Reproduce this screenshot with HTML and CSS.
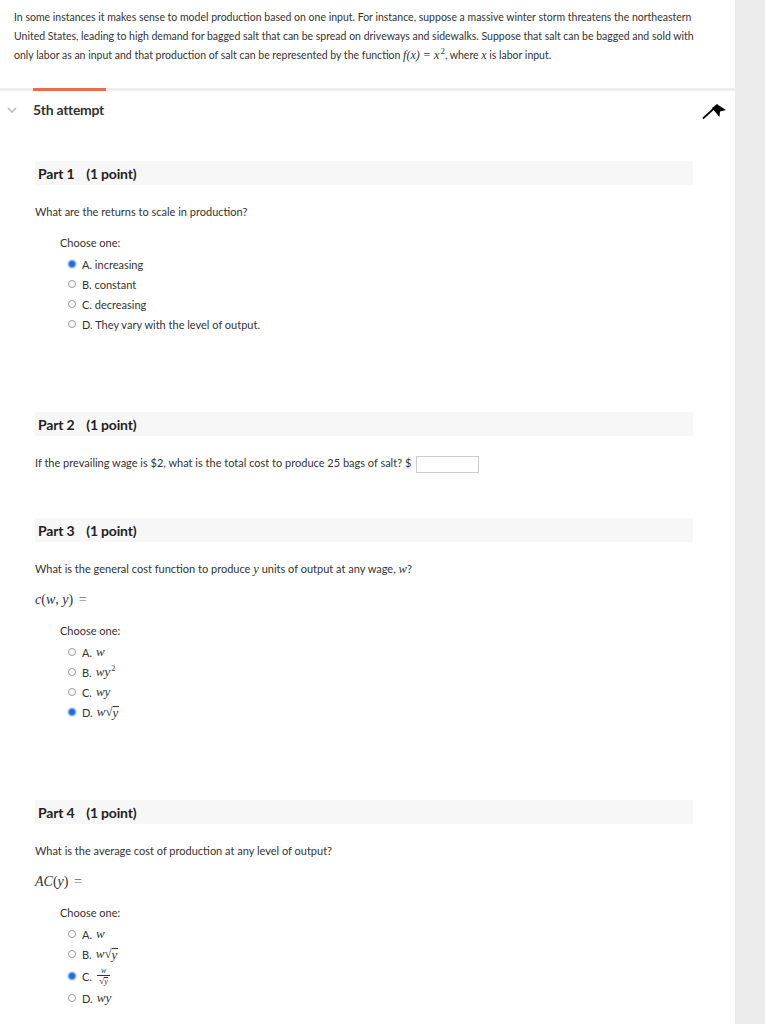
FILE: index.html
```html
<!DOCTYPE html>
<html lang="en">
<head>
<meta charset="utf-8">
<title>5th attempt</title>
<link rel="stylesheet" href="styles.css">
</head>
<body>
<div class="page">
  <main class="main">
    <p class="intro">In some instances it makes sense to model production based on one input. For instance, suppose a massive winter storm threatens the northeastern United States, leading to high demand for bagged salt that can be spread on driveways and sidewalks. Suppose that salt can be bagged and sold with only labor as an input and that production of salt can be represented by the function <span class="m">f(x) = x<sup class="sup">2</sup></span>, where <span class="m">x</span> is labor input.</p>

    <div class="tabbar"><div class="tab-active"></div></div>

    <div class="attempt">
      <svg class="chev" width="10" height="6" viewBox="0 0 10 6"><path d="M1 1 L5 5 L9 1" fill="none" stroke="#bbb" stroke-width="1.6"/></svg>
      <span class="attempt-title">5th attempt</span>
      <svg class="flag" width="26" height="18" viewBox="0 0 26 18"><path d="M2 16.5 L14 5.5" stroke="#000" stroke-width="1.7" fill="none"/><path d="M11 6 L16 2 L18 3.5 L25 8 L19 9.5 L18.5 15 Z" fill="#000"/></svg>
    </div>

    <section class="part">
      <h2 class="part-head"><span>Part 1</span><span>(1 point)</span></h2>
      <p class="q">What are the returns to scale in production?</p>
      <div class="choices">
        <div class="choose">Choose one:</div>
        <div class="opt"><span class="radio on"></span><span>A. increasing</span></div>
        <div class="opt"><span class="radio"></span><span>B. constant</span></div>
        <div class="opt"><span class="radio"></span><span>C. decreasing</span></div>
        <div class="opt"><span class="radio"></span><span>D. They vary with the level of output.</span></div>
      </div>
    </section>

    <section class="part">
      <h2 class="part-head"><span>Part 2</span><span>(1 point)</span></h2>
      <p class="q">If the prevailing wage is $2, what is the total cost to produce 25 bags of salt? $ <span class="input"></span></p>
    </section>

    <section class="part">
      <h2 class="part-head"><span>Part 3</span><span>(1 point)</span></h2>
      <p class="q">What is the general cost function to produce <span class="m">y</span> units of output at any wage, <span class="m">w</span>?</p>
      <p class="eq"><span class="m">c</span>(<span class="m">w</span>, <span class="m">y</span>) <span class="eqs">=</span></p>
      <div class="choices">
        <div class="choose">Choose one:</div>
        <div class="opt"><span class="radio"></span><span>A.</span><span class="m">w</span></div>
        <div class="opt"><span class="radio"></span><span>B.</span><span class="m">wy</span><sup class="osup">2</sup></div>
        <div class="opt"><span class="radio"></span><span>C.</span><span class="m">wy</span></div>
        <div class="opt"><span class="radio on"></span><span>D.</span><span class="m">w</span><span class="sqrt">√<span class="rad">y</span></span></div>
      </div>
    </section>

    <section class="part">
      <h2 class="part-head"><span>Part 4</span><span>(1 point)</span></h2>
      <p class="q">What is the average cost of production at any level of output?</p>
      <p class="eq"><span class="m">AC</span>(<span class="m">y</span>) <span class="eqs">=</span></p>
      <div class="choices">
        <div class="choose">Choose one:</div>
        <div class="opt"><span class="radio"></span><span>A.</span><span class="m">w</span></div>
        <div class="opt"><span class="radio"></span><span>B.</span><span class="m">w</span><span class="sqrt">√<span class="rad">y</span></span></div>
        <div class="opt tall"><span class="radio on"></span><span>C.</span><span class="frac"><span class="num">w</span><span class="den">√<span class="drad">y</span></span></span></div>
        <div class="opt"><span class="radio"></span><span>D.</span><span class="m">wy</span></div>
      </div>
    </section>
  </main>
  <aside class="side"></aside>
</div>
</body>
</html>
```

FILE: styles.css
```css
* { box-sizing: border-box; }
html, body { margin: 0; padding: 0; }
body {
  font-family: Lato, "Open Sans", "Liberation Sans", sans-serif;
  color: #333;
  background: #fff;
}
.page {
  display: flex;
  width: 765px;
  min-height: 1024px;
}
.main {
  width: 735px;
  flex: none;
}
.side {
  flex: 1;
  background: #ececec;
}
.intro {
  margin: 0;
  padding: 8px 30px 0 14px;
  font-size: 10.5px;
  line-height: 19px;
  height: 88px;
}
.m {
  font-family: "Liberation Serif", "DejaVu Serif", serif;
  font-style: italic;
  font-size: 1.15em;
}
.intro .m { line-height: 1; }
.sup {
  font-style: normal;
  font-size: 9px;
  line-height: 0;
  vertical-align: 5px;
  margin-left: 1px;
}
.tabbar {
  height: 3px;
  background: #eee;
  display: flex;
  padding-left: 33px;
}
.tab-active {
  width: 73px;
  background: #ec6a4c;
}
.attempt {
  display: flex;
  align-items: center;
  height: 37px;
}
.chev { margin-left: 7px; margin-right: 16px; }
.attempt-title {
  font-size: 14px;
  font-weight: 700;
  color: #333;
  letter-spacing: -0.3px;
}
.flag { margin-left: auto; margin-right: 8px; margin-top: 2px; }
.part {
  margin: 33px 42px 46px 35px;
}
.part + .part { margin-top: 0; }
.part-head {
  margin: 0;
  height: 24px;
  background: #f7f7f7;
  display: flex;
  align-items: center;
  gap: 12px;
  padding-left: 3px;
  font-size: 14px;
  font-weight: 700;
  color: #222;
  letter-spacing: -0.2px;
}
.q {
  margin: 18px 0 0 0;
  font-size: 11px;
  line-height: 18px;
  height: 18px;
}
.q .m { line-height: 1; }
.input {
  display: inline-block;
  width: 63px;
  height: 17px;
  border: 1px solid #ccc;
  margin-left: 2px;
  vertical-align: middle;
  background: #fff;
}
.eq {
  margin: 13px 0 0 0;
  font-family: "Liberation Serif", "DejaVu Serif", serif;
  font-size: 14px;
  line-height: 18px;
  height: 18px;
}
.eq .m { font-size: 1em; }
.eqs { color: #666; margin-left: 2px; }
.choices {
  padding: 13px 0 32px 25px;
}
.part:last-child .choices { padding-bottom: 0; }
.choose {
  font-size: 11px;
  line-height: 18px;
  margin-bottom: 2px;
}
.opt {
  display: flex;
  align-items: center;
  height: 20px;
  font-size: 11px;
  padding-left: 8px;
}
.opt.tall { height: 24px; }
.radio {
  width: 8px;
  height: 8px;
  border-radius: 50%;
  border: 1px solid #999;
  margin-right: 6px;
  background: #fff;
  flex: none;
}
.radio.on {
  background: #1a6fe0;
  border-color: #7eaaf0;
  box-shadow: 0 0 0 1px #d5e5fb;
}
.opt .m { margin-left: 4px; font-size: 13px; }
.osup {
  font-family: "Liberation Serif", "DejaVu Serif", serif;
  font-size: 8px;
  align-self: flex-start;
  margin-top: 2px;
  margin-left: 1px;
}
.sqrt {
  font-family: "Liberation Serif", "DejaVu Serif", serif;
  font-size: 13px;
  display: inline-flex;
  align-items: flex-end;
  line-height: 14px;
}
.rad {
  border-top: 1px solid #333;
  line-height: 12px;
  font-style: italic;
  font-size: 13px;
  padding-right: 1px;
}
.frac {
  display: inline-flex;
  flex-direction: column;
  align-items: center;
  margin-left: 5px;
  font-family: "Liberation Serif", "DejaVu Serif", serif;
}
.frac .num {
  font-size: 8px;
  font-style: italic;
  line-height: 9px;
  border-bottom: 1px solid #333;
  padding: 0 4px;
}
.frac .den {
  font-size: 9px;
  display: inline-flex;
  align-items: flex-end;
  line-height: 10px;
}
.frac .drad {
  border-top: 1px solid #333;
  font-style: italic;
  font-size: 8px;
  line-height: 8px;
}
```
